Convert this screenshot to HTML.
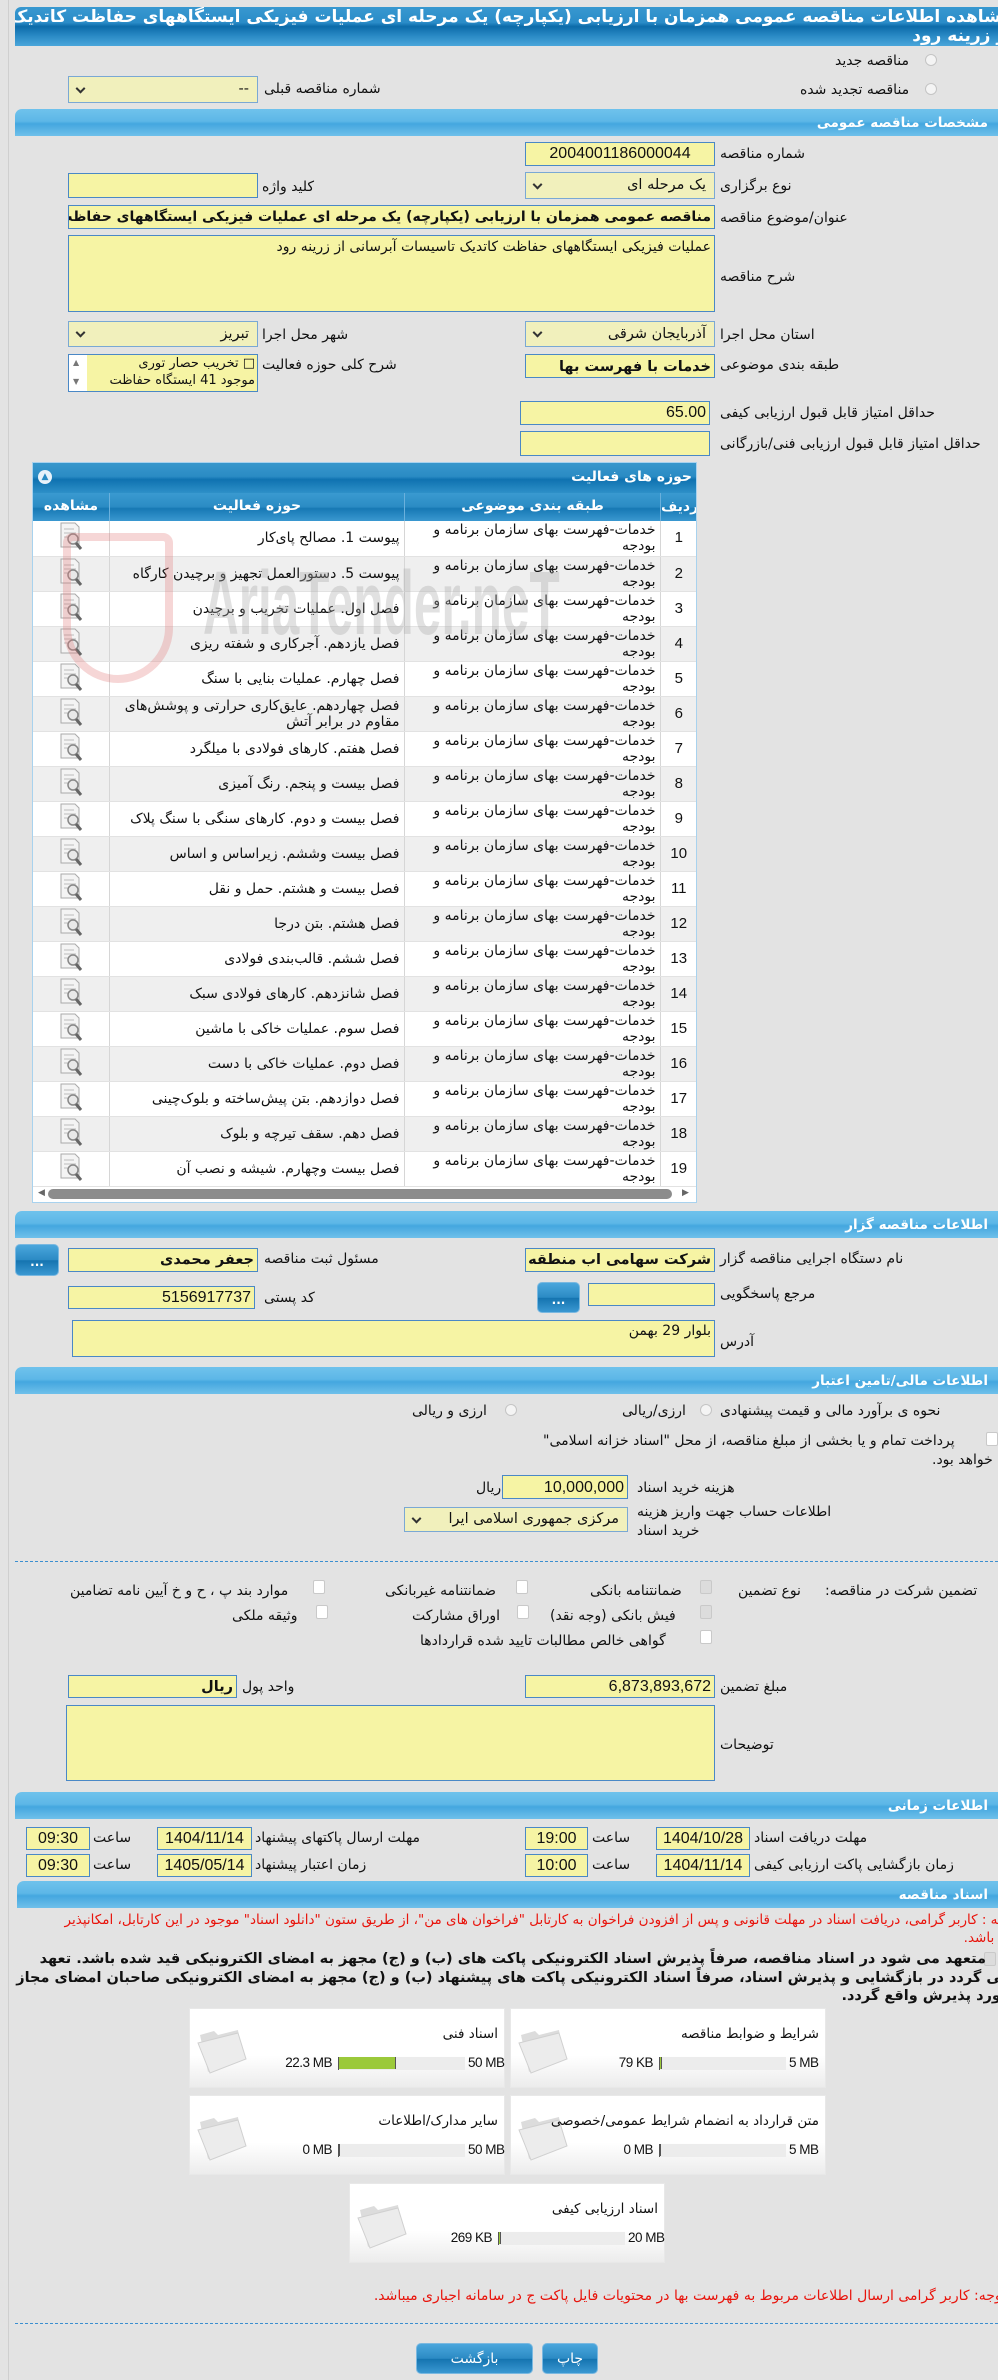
<!DOCTYPE html>
<html><head><meta charset="utf-8">
<style>
*{margin:0;padding:0;box-sizing:border-box}
html,body{width:998px;height:2380px;overflow:hidden;background:#e3e3e3;font-family:"DejaVu Sans","Liberation Sans",sans-serif;font-size:12px;color:#111}
.a{position:absolute;white-space:nowrap}
.l{position:absolute;white-space:nowrap;direction:rtl;font-size:14px;line-height:17px}
.i{position:absolute;background:#f6f4a4;border:1px solid #4a88c6;direction:rtl;text-align:right;overflow:hidden;white-space:nowrap;font-family:"Liberation Sans","DejaVu Sans",sans-serif;font-size:16px;padding:0 3px}
.s{position:absolute;background:#f1f0bc;border:1px solid #7aa8d4;direction:rtl;text-align:right;overflow:hidden;white-space:nowrap;font-size:14.5px;padding:0 8px}
.s:after{content:"";position:absolute;left:8px;top:50%;width:5px;height:5px;border-right:2px solid #333;border-bottom:2px solid #333;transform:translateY(-70%) rotate(45deg)}
.h{position:absolute;left:15px;width:983px;height:27px;border-radius:7px 0 0 0;background:linear-gradient(#6fc2ec,#5db7e7 45%,#44a7df 55%,#6fc0ea);color:#fff;font-weight:bold;font-size:13.5px;direction:rtl;text-align:right;padding:6px 10px 0 0}
.btn{position:absolute;border-radius:5px;background:linear-gradient(#4aa6dc,#2b8ac4 50%,#1574b0 52%,#3a98d2);border:1px solid #7ab8e0;color:#fff;text-align:center;font-weight:bold}
.cb{position:absolute;width:12px;height:14px;border:1px solid #c9c9c9;border-radius:2px;background:#fff}
.cbk{background:#dcdcdc}
.rd{position:absolute;width:12px;height:12px;border:1px solid #c4c4c4;border-radius:50%;background:#f4f4f4}
table{border-collapse:collapse;table-layout:fixed;white-space:normal}
.tb td{border-right:1px solid #d6d6d6;border-bottom:1px solid #e2e2e2;height:35px;font-size:14px;direction:rtl;text-align:right;padding:0 4px;line-height:16px;overflow:hidden;white-space:normal}
.fb{position:absolute;width:316px;height:80px;background:linear-gradient(#fff,#fff 60%,#ececec);border:1px solid #e8e8e8;white-space:nowrap}
.fb .t{position:absolute;right:6px;top:17px;font-size:13.5px;direction:rtl}
.fb .bar{position:absolute;left:148px;top:48px;width:127px;height:13px;background:#ececec;border-left:1px solid #555}
.fb .mx{position:absolute;left:278px;top:46px;font-family:"Liberation Sans",sans-serif;font-size:13.5px;letter-spacing:-0.5px;white-space:nowrap}
.fb .mn{position:absolute;right:172px;top:46px;font-family:"Liberation Sans",sans-serif;font-size:13.5px;letter-spacing:-0.5px;white-space:nowrap}
.red{color:#e8140c}
</style></head><body>
<div class="a" style="left:8px;top:0;width:1px;height:2380px;background:#cfcfcf"></div>

<div class="a" style="left:15px;top:7px;width:983px;height:39px;border-radius:6px 0 0 0;background:linear-gradient(#3898d0,#2a8cc8 40%,#0c6ba9 50%,#2b8bc6 75%,#4aa6da);"></div>
<div class="a" style="left:15px;top:7px;width:983px;height:39px;overflow:hidden">
<div class="a" style="right:-14px;top:1px;color:#fff;font-weight:bold;font-size:17px;direction:rtl;line-height:19px;text-align:right">مشاهده اطلاعات مناقصه عمومی همزمان با ارزیابی (یکپارچه) یک مرحله ای عملیات فیزیکی ایستگاههای حفاظت کاتدیک تاسیسات آبرسانی<br>از زرینه رود</div></div>

<div class="rd" style="left:925px;top:54px"></div><div class="l" style="left:835px;top:53px">مناقصه جدید</div>
<div class="rd" style="left:925px;top:83px"></div><div class="l" style="left:800px;top:82px">مناقصه تجدید شده</div>
<div class="s" style="left:68px;top:76px;width:190px;height:27px;line-height:25px">--</div>
<div class="l" style="left:264px;top:81px">شماره مناقصه قبلی</div>

<div class="h" style="top:109px">مشخصات مناقصه عمومی</div>
<div class="i" style="left:525px;top:142px;width:190px;height:24px;line-height:22px;text-align:center">2004001186000044</div>
<div class="l" style="left:720px;top:146px">شماره مناقصه</div>
<div class="s" style="left:525px;top:172px;width:190px;height:27px;line-height:25px">یک مرحله ای</div>
<div class="l" style="left:720px;top:178px">نوع برگزاری</div>
<div class="i" style="left:68px;top:173px;width:190px;height:25px"></div>
<div class="l" style="left:262px;top:179px">کلید واژه</div>
<div class="i" style="left:68px;top:205px;width:647px;height:24px;line-height:22px;font-size:14px;font-family:'DejaVu Sans',sans-serif;font-weight:bold">مناقصه عمومی همزمان با ارزیابی (یکپارچه) یک مرحله ای عملیات فیزیکی ایستگاههای حفاظت کاتدیک</div>
<div class="l" style="left:720px;top:210px">عنوان/موضوع مناقصه</div>
<div class="i" style="left:68px;top:235px;width:647px;height:77px;font-size:14px;font-family:'DejaVu Sans',sans-serif;padding-top:3px">عملیات فیزیکی ایستگاههای حفاظت کاتدیک تاسیسات آبرسانی از زرینه رود</div>
<div class="l" style="left:720px;top:269px">شرح مناقصه</div>
<div class="s" style="left:525px;top:321px;width:190px;height:26px;line-height:24px">آذربایجان شرقی</div>
<div class="l" style="left:720px;top:327px">استان محل اجرا</div>
<div class="s" style="left:68px;top:321px;width:190px;height:26px;line-height:24px">تبریز</div>
<div class="l" style="left:262px;top:327px">شهر محل اجرا</div>
<div class="i" style="left:525px;top:354px;width:190px;height:24px;line-height:24px;font-size:14.5px;font-family:'DejaVu Sans',sans-serif;font-weight:bold">خدمات با فهرست بها</div>
<div class="l" style="left:720px;top:357px">طبقه بندی موضوعی</div>
<div class="a" style="left:68px;top:354px;width:190px;height:38px;background:#fff;border:1px solid #4a88c6"></div>
<div class="a" style="left:87px;top:355px;width:170px;height:36px;background:#f6f4a4;direction:rtl;text-align:right;font-size:13px;line-height:17px;padding-right:2px;overflow:hidden">□ تخریب حصار توری<br>موجود 41 ایستگاه حفاظت</div>
<div class="a" style="left:73px;top:358px;font-size:8px;color:#777">▲</div><div class="a" style="left:73px;top:377px;font-size:8px;color:#777">▼</div>
<div class="l" style="left:262px;top:357px">شرح کلی حوزه فعالیت</div>
<div class="i" style="left:520px;top:401px;width:190px;height:24px;line-height:22px">65.00</div>
<div class="l" style="left:720px;top:405px">حداقل امتیاز قابل قبول ارزیابی کیفی</div>
<div class="i" style="left:520px;top:431px;width:190px;height:25px"></div>
<div class="l" style="left:720px;top:436px">حداقل امتیاز قابل قبول ارزیابی فنی/بازرگانی</div>

<div class="a" style="left:32px;top:462px;width:665px;height:741px;background:#fff;border:1px solid #a8d2ee;overflow:hidden;white-space:normal">
 <div style="height:30px;background:linear-gradient(#3897cc,#2a8bc4 45%,#0f72b0 55%,#2e90c8);color:#fff;font-weight:bold;direction:rtl;text-align:right;padding:6px 4px 0 0;font-size:14px;position:relative">حوزه های فعالیت<span style="position:absolute;left:5px;top:7px;width:14px;height:14px;border-radius:50%;background:#e8f2fa;color:#2a8bc4;font-size:9px;line-height:14px;text-align:center">▲</span></div>
 <div style="height:28px;background:linear-gradient(#3a9ad0,#2a8bc4 50%,#1678b4 55%,#3a98d0);color:#fff;font-weight:bold;font-size:14px;position:relative">
  <span class="a" style="left:627px;width:37px;text-align:center;border-left:1px solid #6ab0dc;height:28px;top:0;padding-top:6px">ردیف</span>
  <span class="a" style="left:371px;top:0;width:256px;height:28px;text-align:center;border-left:1px solid #6ab0dc;padding-top:5px">طبقه بندی موضوعی</span>
  <span class="a" style="left:76px;top:0;width:295px;height:28px;text-align:center;border-left:1px solid #6ab0dc;padding-top:5px">حوزه فعالیت</span>
  <span class="a" style="left:0;top:0;width:76px;text-align:center;padding-top:5px">مشاهده</span>
 </div>
 <div class="a" style="left:170px;top:90px;font-size:90px;font-weight:bold;color:rgba(170,170,170,0.35);font-family:'Liberation Sans',sans-serif;transform:scaleX(0.55);transform-origin:left;z-index:2">AriaTender.neT</div>
 <div class="a" style="left:30px;top:70px;width:110px;height:150px;border:8px solid rgba(225,120,120,0.3);border-radius:10px 10px 55px 55px;z-index:2"></div>
 <table class="tb" style="width:664px;position:relative" id="t">
 </table>
</div>
<div class="a" style="left:48px;top:1189px;width:624px;height:10px;border-radius:5px;background:#8c8c8c"></div>
<div class="a" style="left:38px;top:1188px;font-size:9px;color:#666">◀</div>
<div class="a" style="left:682px;top:1188px;font-size:9px;color:#666">▶</div>

<div class="h" style="top:1211px">اطلاعات مناقصه گزار</div>
<div class="i" style="left:525px;top:1248px;width:190px;height:24px;line-height:23px;font-size:14.5px;font-family:'DejaVu Sans',sans-serif;font-weight:bold">شرکت سهامی اب منطقه ای</div>
<div class="l" style="left:720px;top:1251px">نام دستگاه اجرایی مناقصه گزار</div>
<div class="i" style="left:68px;top:1248px;width:190px;height:24px;line-height:23px;font-size:14.5px;font-family:'DejaVu Sans',sans-serif;font-weight:bold">جعفر محمدی</div>
<div class="l" style="left:264px;top:1251px">مسئول ثبت مناقصه</div>
<div class="btn" style="left:15px;top:1244px;width:44px;height:32px;line-height:34px">...</div>
<div class="i" style="left:588px;top:1283px;width:127px;height:23px"></div>
<div class="l" style="left:720px;top:1286px">مرجع پاسخگویی</div>
<div class="btn" style="left:537px;top:1282px;width:43px;height:31px;line-height:34px">...</div>
<div class="i" style="left:68px;top:1286px;width:187px;height:23px;line-height:22px">5156917737</div>
<div class="l" style="left:264px;top:1290px">کد پستی</div>
<div class="i" style="left:72px;top:1320px;width:643px;height:37px;font-size:14px;font-family:'DejaVu Sans',sans-serif;padding-top:2px">بلوار 29 بهمن</div>
<div class="l" style="left:720px;top:1334px">آدرس</div>

<div class="h" style="top:1367px">اطلاعات مالی/تامین اعتبار</div>
<div class="l" style="left:720px;top:1403px">نحوه ی برآورد مالی و قیمت پیشنهادی</div>
<div class="rd" style="left:700px;top:1404px"></div><div class="l" style="left:622px;top:1403px">ارزی/ریالی</div>
<div class="rd" style="left:505px;top:1404px"></div><div class="l" style="left:412px;top:1403px">ارزی و ریالی</div>
<div class="cb" style="left:986px;top:1432px"></div>
<div class="l" style="left:543px;top:1433px">پرداخت تمام و یا بخشی از مبلغ مناقصه، از محل "اسناد خزانه اسلامی"</div>
<div class="l" style="left:932px;top:1452px">خواهد بود.</div>
<div class="i" style="left:502px;top:1475px;width:126px;height:24px;line-height:23px">10,000,000</div>
<div class="l" style="left:476px;top:1480px">ریال</div>
<div class="l" style="left:637px;top:1480px">هزینه خرید اسناد</div>
<div class="s" style="left:404px;top:1507px;width:224px;height:25px;line-height:23px;padding-left:22px">مرکزی جمهوری اسلامی ایرا</div>
<div class="l" style="left:637px;top:1504px">اطلاعات حساب جهت واریز هزینه</div>
<div class="l" style="left:637px;top:1523px">خرید اسناد</div>
<div class="a" style="left:15px;top:1561px;width:983px;border-top:1px dashed #3b8fd0"></div>

<div class="l" style="left:825px;top:1583px">تضمین شرکت در مناقصه:</div>
<div class="l" style="left:738px;top:1583px">نوع تضمین</div>
<div class="cb cbk" style="left:700px;top:1580px"></div><div class="l" style="left:590px;top:1583px">ضمانتنامه بانکی</div>
<div class="cb" style="left:516px;top:1580px"></div><div class="l" style="left:385px;top:1583px">ضمانتنامه غیربانکی</div>
<div class="cb" style="left:313px;top:1580px"></div><div class="l" style="left:70px;top:1583px">موارد بند پ ، ح و خ آیین نامه تضامین</div>
<div class="cb cbk" style="left:700px;top:1605px"></div><div class="l" style="left:550px;top:1608px">فیش بانکی (وجه نقد)</div>
<div class="cb" style="left:517px;top:1605px"></div><div class="l" style="left:412px;top:1608px">اوراق مشارکت</div>
<div class="cb" style="left:316px;top:1605px"></div><div class="l" style="left:232px;top:1608px">وثیقه ملکی</div>
<div class="cb" style="left:700px;top:1630px"></div><div class="l" style="left:420px;top:1633px">گواهی خالص مطالبات تایید شده قراردادها</div>

<div class="i" style="left:525px;top:1675px;width:190px;height:23px;line-height:22px">6,873,893,672</div>
<div class="l" style="left:720px;top:1679px">مبلغ تضمین</div>
<div class="i" style="left:68px;top:1675px;width:169px;height:23px;line-height:22px;font-size:14.5px;font-family:'DejaVu Sans',sans-serif;font-weight:bold">ریال</div>
<div class="l" style="left:242px;top:1679px">واحد پول</div>
<div class="i" style="left:66px;top:1705px;width:649px;height:76px"></div>
<div class="l" style="left:720px;top:1737px">توضیحات</div>

<div class="h" style="top:1792px">اطلاعات زمانی</div>
<div class="i" style="left:656px;top:1827px;width:94px;height:23px;line-height:22px;text-align:center">1404/10/28</div>
<div class="l" style="left:754px;top:1830px">مهلت دریافت اسناد</div>
<div class="i" style="left:525px;top:1827px;width:63px;height:23px;line-height:22px;text-align:center">19:00</div>
<div class="l" style="left:592px;top:1830px">ساعت</div>
<div class="i" style="left:157px;top:1827px;width:95px;height:23px;line-height:22px;text-align:center">1404/11/14</div>
<div class="l" style="left:255px;top:1830px">مهلت ارسال پاکتهای پیشنهاد</div>
<div class="i" style="left:26px;top:1827px;width:64px;height:23px;line-height:22px;text-align:center">09:30</div>
<div class="l" style="left:93px;top:1830px">ساعت</div>
<div class="i" style="left:656px;top:1854px;width:94px;height:23px;line-height:22px;text-align:center">1404/11/14</div>
<div class="l" style="left:754px;top:1857px">زمان بازگشایی پاکت ارزیابی کیفی</div>
<div class="i" style="left:525px;top:1854px;width:63px;height:23px;line-height:22px;text-align:center">10:00</div>
<div class="l" style="left:592px;top:1857px">ساعت</div>
<div class="i" style="left:157px;top:1854px;width:95px;height:23px;line-height:22px;text-align:center">1405/05/14</div>
<div class="l" style="left:255px;top:1857px">زمان اعتبار پیشنهاد</div>
<div class="i" style="left:26px;top:1854px;width:64px;height:23px;line-height:22px;text-align:center">09:30</div>
<div class="l" style="left:93px;top:1857px">ساعت</div>

<div class="h" style="top:1881px;left:17px;width:981px">اسناد مناقصه</div>
<div class="a" style="left:15px;top:1910px;width:983px;height:400px;overflow:hidden">
<div class="a red" style="left:40px;top:1px;width:962px;white-space:normal;direction:rtl;text-align:right;font-size:13.5px;line-height:18px">توجه : کاربر گرامی، دریافت اسناد در مهلت قانونی و پس از افزودن فراخوان به کارتابل "فراخوان های من"، از طریق ستون "دانلود اسناد" موجود در این کارتابل، امکانپذیر می باشد.</div>
<div class="cb cbk" style="left:969px;top:42px"></div>
<div class="a" style="left:0;top:40px;width:995px;white-space:normal;direction:rtl;text-align:right;font-size:14.5px;font-weight:bold;line-height:18.5px;text-indent:24px">متعهد می شود در اسناد مناقصه، صرفاً پذیرش اسناد الکترونیکی پاکت های (ب) و (ج) مجهز به امضای الکترونیکی قید شده باشد. تعهد می گردد در بازگشایی و پذیرش اسناد، صرفاً اسناد الکترونیکی پاکت های پیشنهاد (ب) و (ج) مجهز به امضای الکترونیکی صاحبان امضای مجاز مورد پذیرش واقع گردد.</div>
<div class="a red" style="right:-8px;top:378px;direction:rtl;font-size:14px">توجه: کاربر گرامی ارسال اطلاعات مربوط به فهرست بها در محتویات فایل پاکت ج در سامانه اجباری میباشد.</div>
</div>

<div id="files"></div>

<div class="a" style="left:15px;top:2323px;width:983px;border-top:1px dashed #3b8fd0"></div>
<div class="btn" style="left:416px;top:2343px;width:117px;height:31px;line-height:30px;font-weight:normal;font-size:14px">بازگشت</div>
<div class="btn" style="left:542px;top:2343px;width:56px;height:31px;line-height:30px;font-weight:normal;font-size:14px">چاپ</div>

<script>
var acts=["پیوست 1. مصالح پای‌کار","پیوست 5. دستورالعمل تجهیز و برچیدن کارگاه","فصل اول. عملیات تخریب و برچیدن","فصل یازدهم. آجرکاری و شفته ریزی","فصل چهارم. عملیات بنایی با سنگ","فصل چهاردهم. عایق‌کاری حرارتی و پوشش‌های مقاوم در برابر آتش","فصل هفتم. کارهای فولادی با میلگرد","فصل بیست و پنجم. رنگ آمیزی","فصل بیست و دوم. کارهای سنگی با سنگ پلاک","فصل بیست وششم. زیراساس و اساس","فصل بیست و هشتم. حمل و نقل","فصل هشتم. بتن درجا","فصل ششم. قالب‌بندی فولادی","فصل شانزدهم. کارهای فولادی سبک","فصل سوم. عملیات خاکی با ماشین","فصل دوم. عملیات خاکی با دست","فصل دوازدهم. بتن پیش‌ساخته و بلوک‌چینی","فصل دهم. سقف تیرچه و بلوک","فصل بیست وچهارم. شیشه و نصب آن"];
var ic='<svg width="32" height="30" viewBox="0 0 32 30"><path d="M6 2h14l4 4v20H6z" fill="#f4f4f4" stroke="#aaa"/><path d="M9 8h10M9 12h12M9 16h8" stroke="#bbb"/><circle cx="18" cy="18" r="5" fill="#e8e8e8" stroke="#888" stroke-width="1.5"/><path d="M21 22l5 6" stroke="#666" stroke-width="3"/></svg>';
var h='';
acts.forEach(function(a,i){var bg=i%2?'#efefef':'#fff';
h+='<tr style="background:'+bg+'"><td style="width:76px;text-align:center;padding:0">'+ic+'</td><td style="width:295px">'+a+'</td><td style="width:256px">خدمات-فهرست بهای سازمان برنامه و بودجه</td><td style="width:37px;text-align:center;font-family:Liberation Sans;font-size:15px;border-right:none">'+(i+1)+'</td></tr>';});
document.getElementById('t').innerHTML=h;
var fold='<svg class="a" style="left:6px;top:16px" width="54" height="52" viewBox="0 0 54 52"><path d="M4 10l14-4 4 4 20-5 4 30-34 12z" fill="#dcdcdc"/><path d="M2 18l40-10 8 26-36 14z" fill="#ececec" stroke="#d0d0d0"/></svg>';
var F=[[510,2008,"شرایط و ضوابط مناقصه","79 KB","5 MB",2],[189,2008,"اسناد فنی","22.3 MB","50 MB",57],[510,2095,"متن قرارداد به انضمام شرایط عمومی/خصوصی","0 MB","5 MB",0],[189,2095,"سایر مدارک/اطلاعات","0 MB","50 MB",0],[349,2183,"اسناد ارزیابی کیفی","269 KB","20 MB",2]];
var fh='';F.forEach(function(f){fh+='<div class="fb" style="left:'+f[0]+'px;top:'+f[1]+'px">'+fold+'<div class="t">'+f[2]+'</div><div class="mx">'+f[4]+'</div><div class="bar"><div style="width:'+f[5]+'px;height:12px;background:#9bc93a;border-right:1px solid #555"></div></div><div class="mn">'+f[3]+'</div></div>';});
document.getElementById('files').innerHTML=fh;
</script>
</body></html>
